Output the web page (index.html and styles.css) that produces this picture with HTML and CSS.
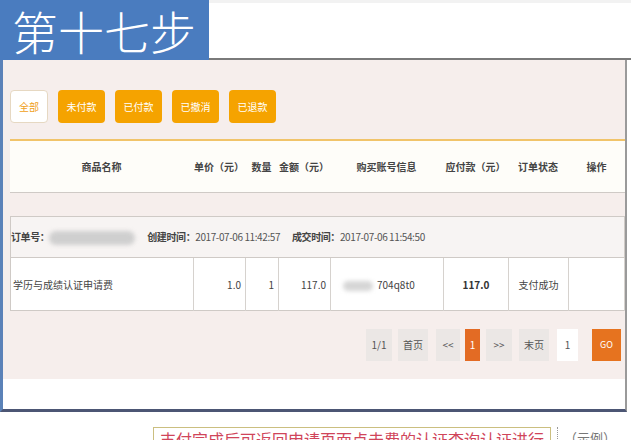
FILE: index.html
```html
<!DOCTYPE html>
<html>
<head>
    <meta charset="UTF-8">
    <title>第十七步</title>
    <link rel="stylesheet" href="styles.css">
</head>
<body>
    <div class="top">
        <div class="step">第十七步</div>
        <div class="top-rest"></div>
    </div>

    <div class="panel">
        <div class="content">
            <div class="tabs">
                <span class="tab tab-all">全部</span>
                <span class="tab">未付款</span>
                <span class="tab">已付款</span>
                <span class="tab">已撤消</span>
                <span class="tab">已退款</span>
            </div>

            <table class="head">
                <colgroup>
                    <col class="c1"><col class="c2"><col class="c3"><col class="c4">
                    <col class="c5"><col class="c6"><col class="c7"><col>
                </colgroup>
                <tr>
                    <th>商品名称</th>
                    <th>单价（元）</th>
                    <th>数量</th>
                    <th>金额（元）</th>
                    <th>购买账号信息</th>
                    <th>应付款（元）</th>
                    <th>订单状态</th>
                    <th>操作</th>
                </tr>
            </table>

            <table class="order">
                <colgroup>
                    <col class="c1"><col class="c2"><col class="c3"><col class="c4">
                    <col class="c5"><col class="c6"><col class="c7"><col>
                </colgroup>
                <tr class="info">
                    <td colspan="8">
                        <span class="lbl">订单号：</span><span class="blur"></span>
                        <span class="lbl gap">创建时间：</span>2017-07-06 11:42:57
                        <span class="lbl gap">成交时间：</span>2017-07-06 11:54:50
                    </td>
                </tr>
                <tr class="row">
                    <td class="name">学历与成绩认证申请费</td>
                    <td class="num">1.0</td>
                    <td class="num">1</td>
                    <td class="num">117.0</td>
                    <td class="acct"><span class="blur small"></span>704q8t0</td>
                    <td class="mid strong">117.0</td>
                    <td class="mid">支付成功</td>
                    <td></td>
                </tr>
            </table>

            <div class="pager">
                <span class="pg">1/1</span>
                <span class="pg wide first">首页</span>
                <span class="pg prev">&lt;&lt;</span>
                <span class="pg cur">1</span>
                <span class="pg next">&gt;&gt;</span>
                <span class="pg wide last">末页</span>
                <span class="pg inp">1</span>
                <span class="pg go">GO</span>
            </div>
        </div>
        <div class="panel-foot"></div>
    </div>

    <div class="note-row">
        <div class="note">支付完成后可返回申请页面点击费的认证查询认证进行</div>
        <div class="note-side">（示例）</div>
    </div>
</body>
</html>
```

FILE: styles.css
```css
html, body { margin: 0; padding: 0; height: 440px; overflow: hidden; background: #fff; }
body { font-family: "Noto Sans CJK SC", "Liberation Sans", sans-serif; font-size: 10px; color: #444; }

.top { display: flex; height: 60px; }
.step { width: 197px; padding-left: 12px; background: #4a7cbf; color: #fff; font-size: 46px; line-height: 60px; font-weight: 300; white-space: nowrap; }
.top-rest { flex: 1; border-top: 3px solid #f2f2f2; border-bottom: 2px solid #7a7a7a; }

.panel { margin-right: 4px; border-left: 3px solid #5b82b8; border-right: 2px solid #9a9a9a; border-bottom: 3px solid #4c5674; }
.content { background: #f6eeec; padding: 30px 0 18px 7px; }
.panel-foot { height: 30px; background: #fff; }

.tabs { display: flex; gap: 10px; }
.tab { width: 47px; height: 33px; line-height: 33px; text-align: center; background: #f5a300; color: #fff; border-radius: 4px; font-size: 10px; box-sizing: border-box; }
.tab-all { width: 38px; background: #fff; color: #f0a020; border: 1px solid #e6d8c2; line-height: 31px; }

table { width: 100%; border-collapse: collapse; table-layout: fixed; }
col.c1 { width: 183px; }
col.c2 { width: 52px; }
col.c3 { width: 33px; }
col.c4 { width: 52px; }
col.c5 { width: 113px; }
col.c6 { width: 65px; }
col.c7 { width: 60px; }

.head { margin-top: 16px; border-top: 2px solid #f1c46a; border-bottom: 1px solid #cfcac6; background: #fefdf9; }
.head th { height: 51px; font-weight: bold; color: #444; font-size: 10px; text-align: center; padding: 0; white-space: nowrap; }

.order { margin-top: 23px; border: 1px solid #cfcac6; }
.info td { height: 40px; background: #f7f4f3; padding: 0; color: #555; border-bottom: 1px solid #cfcac6; white-space: nowrap; letter-spacing: -0.4px; }
.lbl { font-weight: bold; color: #444; }
.gap { margin-left: 10px; }
.blur { display: inline-block; width: 86px; height: 14px; vertical-align: middle; background: #cfcfcf; border-radius: 7px; filter: blur(2px); }
.blur.small { width: 30px; height: 10px; background: #d6d6d6; margin: 0 4px 0 8px; }

.row td { height: 52px; background: #fff; border-right: 1px solid #d6d2ce; padding: 0 4px; white-space: nowrap; }
.row td.name { padding-left: 2px; }
.num { text-align: right; }
.mid { text-align: center; }
.strong { font-weight: bold; color: #333; }
.acct { padding-left: 0; }

.pager { display: flex; justify-content: flex-end; margin-top: 18px; padding-right: 4px; }
.pg { width: 26px; height: 32px; line-height: 32px; text-align: center; background: #ebe7e5; color: #555; box-sizing: border-box; }
.pg.wide { width: 30px; }
.pg.first { margin-left: 6px; }
.pg.prev { width: 24px; margin-left: 8px; }
.pg.cur { width: 15px; margin-left: 5px; background: #e36b24; color: #fff; }
.pg.next { margin-left: 6px; }
.pg.last { margin-left: 7px; }
.pg.inp { width: 21px; margin-left: 8px; background: #fff; }
.pg.go { width: 29px; margin-left: 14px; background: #e6731f; color: #fff; font-size: 9px; }

.note-row { display: flex; align-items: flex-start; margin-top: 15px; }
.note { margin-left: 153px; padding: 0 6px; border: 1px solid #cbbf80; color: #d0455a; font-size: 16px; line-height: 22px; white-space: nowrap; }
.note-side { margin-left: 6px; padding-left: 6px; border-left: 1px dotted #999; color: #777; font-size: 13px; line-height: 22px; white-space: nowrap; }
```
